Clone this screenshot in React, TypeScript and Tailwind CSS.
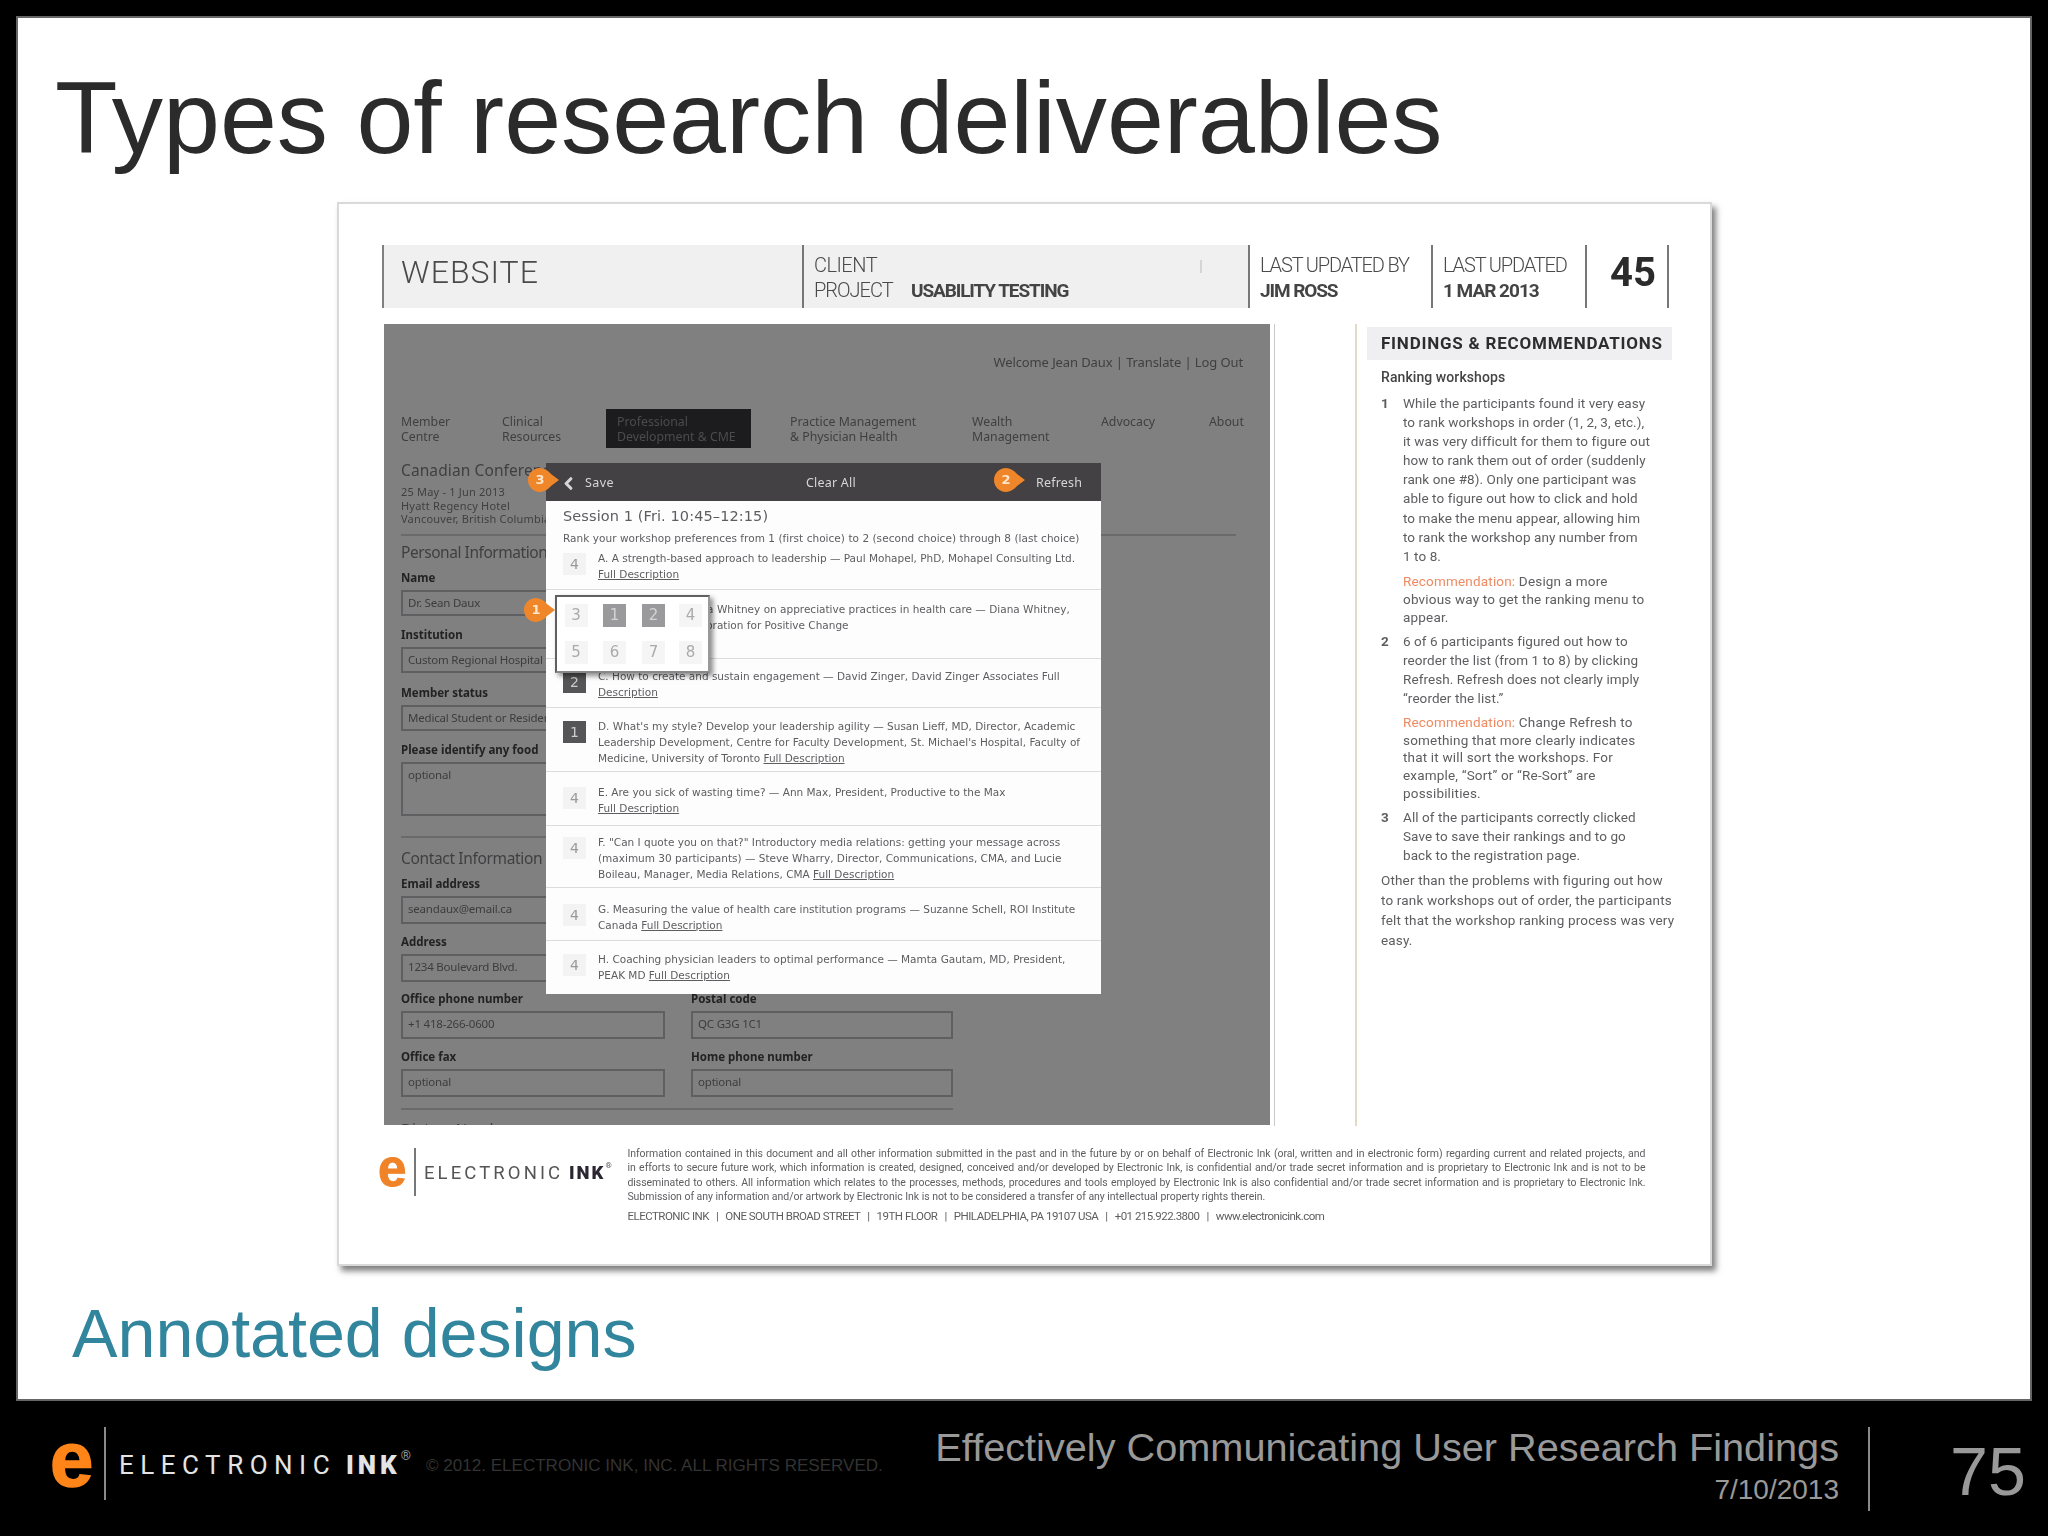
import React from "react";
import { ChevronLeft } from "lucide-react";

type LinesProps = { lines: string[]; className?: string };

const Lines = ({ lines, className }: LinesProps) => (
  <div className={className}>
    {lines.map((line) => (
      <div key={line} className="whitespace-nowrap">
        {line}
      </div>
    ))}
  </div>
);

const nav = [
  { lines: ["Member", "Centre"], className: "w-[101px]" },
  { lines: ["Clinical", "Resources"], className: "w-[104px]" },
  {
    lines: ["Professional", "Development & CME"],
    className: "w-[145px] bg-[#1c1b1d] pl-[11px] mr-[39px] text-[#4c4b4d]",
  },
  { lines: ["Practice Management", "& Physician Health"], className: "w-[182px]" },
  { lines: ["Wealth", "Management"], className: "w-[129px]" },
  { lines: ["Advocacy"], className: "w-[108px]" },
  { lines: ["About"], className: "w-[40px]" },
];

const sessions = [
  {
    rank: "4",
    lines: ["A. A strength-based approach to leadership — Paul Mohapel, PhD, Mohapel Consulting Ltd."],
    link: "Full Description",
    newLine: true,
    className: "h-[42px] pt-[3px]",
  },
  {
    rank: "",
    lines: [
      "B. Evening with Diana Whitney on appreciative practices in health care — Diana Whitney,",
      "PhD, President, Corporation for Positive Change",
    ],
    link: "",
    className: "h-[69px] pt-[11px] border-t",
  },
  {
    rank: "2",
    lines: ["C. How to create and sustain engagement — David Zinger, David Zinger Associates Full"],
    link: "Description",
    newLine: true,
    className: "h-[49px] pt-[9px] border-t",
  },
  {
    rank: "1",
    lines: [
      "D. What's my style? Develop your leadership agility — Susan Lieff, MD, Director, Academic",
      "Leadership Development, Centre for Faculty Development, St. Michael's Hospital, Faculty of",
      "Medicine, University of Toronto ",
    ],
    link: "Full Description",
    className: "h-[64px] pt-[10px] border-t",
  },
  {
    rank: "4",
    lines: ["E. Are you sick of wasting time? — Ann Max, President, Productive to the Max"],
    link: "Full Description",
    newLine: true,
    className: "h-[54px] pt-[12px] border-t",
  },
  {
    rank: "4",
    lines: [
      'F. "Can I quote you on that?" Introductory media relations: getting your message across',
      "(maximum 30 participants) — Steve Wharry, Director, Communications, CMA, and Lucie",
      "Boileau, Manager, Media Relations, CMA ",
    ],
    link: "Full Description",
    className: "h-[62px] pt-[8px] border-t",
  },
  {
    rank: "4",
    lines: [
      "G. Measuring the value of health care institution programs — Suzanne Schell, ROI Institute",
      "Canada ",
    ],
    link: "Full Description",
    className: "h-[53px] pt-[13px] border-t",
  },
  {
    rank: "4",
    lines: [
      "H. Coaching physician leaders to optimal performance — Mamta Gautam, MD, President,",
      "PEAK MD ",
    ],
    link: "Full Description",
    className: "h-[54px] pt-[10px] border-t",
  },
];

const legal = [
  "Information contained in this document and all other information submitted in the past and in the future by or on behalf of Electronic Ink (oral, written and in electronic form) regarding current and related projects, and",
  "in efforts to secure future work, which information is created, designed, conceived and/or developed by Electronic Ink, is confidential and/or trade secret information and is proprietary to Electronic Ink and is not to be",
  "disseminated to others. All information which relates to the processes, methods, procedures and tools employed by Electronic Ink is also confidential and/or trade secret information and is proprietary to Electronic Ink.",
];

const Field = ({ label, value, className }: { label: string; value: string; className?: string }) => (
  <div>
    <div className="h-4 text-[11.500px] leading-4 font-bold text-[#222] whitespace-nowrap">{label}</div>
    <div
      className={`mt-1 border-2 border-[#5f5e60] pl-[5px] text-[11.500px] leading-[22px] tracking-[-0.2px] text-[#3c3c3c] whitespace-nowrap ${
        className ?? "h-[28px] w-[264px]"
      }`}
    >
      {value}
    </div>
  </div>
);

const Marker = ({ n, className }: { n: string; className: string }) => (
  <div className={`absolute h-6 w-[31px] ${className}`}>
    <svg className="absolute inset-0" viewBox="0 0 31 24" fill="#f0862a">
      <path d="M12 0C5.400 0 0 5.400 0 12s5.400 12 12 12c4 0 8-2.500 11-6l8-6-8-6c-3-3.500-7-6-11-6z" />
    </svg>
    <span className="relative block w-6 text-center text-[13px] leading-6 font-bold text-[#ffe6cc]">{n}</span>
  </div>
);

const RankMenu = () => (
  <div className="absolute left-[9px] top-[132px] grid h-[78px] w-[155px] grid-cols-[38px_39px_39px_35px] grid-rows-2 items-center justify-items-center border-2 border-[#5f5f61] border-r-[#999] border-b-[#888] bg-white text-[15px] text-[#aaa] shadow-[3px_3px_5px_rgba(0,0,0,0.45)]">
    {["3", "1", "2", "4", "5", "6", "7", "8"].map((n) => (
      <span
        key={n}
        className={`h-[23px] w-[23px] text-center leading-[23px] ${
          n === "1" || n === "2" ? "bg-[#9a999b] text-[#d4d4d4]" : "bg-[#f5f5f5]"
        }`}
      >
        {n}
      </span>
    ))}
  </div>
);

const SessionDialog = () => (
  <div className="absolute left-[162px] top-[139px] h-[531px] w-[555px] bg-[#fefdfe] font-['DejaVu_Sans',sans-serif] text-[#5d5c5f]">
    <div className="flex h-[38px] items-center bg-[#434143] pt-[2px] text-[12.500px] text-[#d6d6d6] font-['Noto_Sans',sans-serif]">
      <ChevronLeft className="ml-[13px] h-[19px] w-[19px]" strokeWidth={4} />
      <span className="ml-[7px] w-[221px] tracking-[0.4px]">Save</span>
      <span className="w-[230px] tracking-[0.2px]">Clear All</span>
      <span className="tracking-[0.2px]">Refresh</span>
    </div>
    <h3 className="mt-[6px] pl-[17px] text-[14.500px] leading-[18px] tracking-[0.1px]">Session 1 (Fri. 10:45–12:15)</h3>
    <p className="mt-[5px] mb-px h-4 pl-[17px] text-[10.500px] leading-4 tracking-[0.04px] whitespace-nowrap">
      Rank your workshop preferences from 1 (first choice) to 2 (second choice) through 8 (last choice)
    </p>
    {sessions.map((s) => (
      <div key={s.lines[0]} className={`flex gap-[12px] border-[#dcdbdd] pl-[17px] ${s.className}`}>
        <span
          className={`mt-[3px] h-[22px] w-[23px] shrink-0 text-center text-[14px] leading-[22px] ${
            s.rank === "4" ? "bg-[#f3f3f3] text-[#999]" : s.rank ? "bg-[#555456] text-[#ccc]" : ""
          }`}
        >
          {s.rank}
        </span>
        <div className="text-[10.500px] leading-4 whitespace-nowrap">
          {s.lines.map((line, i) => (
            <div key={line}>
              {line}
              {!s.newLine && i === s.lines.length - 1 && <span className="underline">{s.link}</span>}
            </div>
          ))}
          {s.newLine && <div className="underline">{s.link}</div>}
        </div>
      </div>
    ))}
    <RankMenu />
    <Marker n="3" className="left-[-18px] top-[5px]" />
    <Marker n="2" className="left-[448px] top-[5px]" />
    <Marker n="1" className="left-[-22px] top-[135px]" />
  </div>
);

const Wireframe = () => (
  <div className="relative h-[801px] w-[886px] bg-[#808080] font-['Noto_Sans',sans-serif] text-[#3f3f41]">
    <div className="h-full overflow-hidden pl-[17px]">
      <div className="pt-[29px] pr-[27px] text-right text-[13px] leading-[18px] tracking-[-0.1px]">
        Welcome Jean Daux | Translate | Log Out
      </div>
      <div className="mt-[38px] flex h-[39px] text-[12.300px] leading-[14.500px]">
        {nav.map((item) => (
          <Lines key={item.lines[0]} lines={item.lines} className={`pt-[6px] ${item.className}`} />
        ))}
      </div>
      <h3 className="mt-3 text-[15.500px] leading-5 tracking-[0.1px]">Canadian Conference</h3>
      <Lines
        lines={["25 May - 1 Jun 2013", "Hyatt Regency Hotel", "Vancouver, British Columbia"]}
        className="mt-[5px] text-[11px] leading-[13.500px] tracking-[0.2px]"
      />
      <div className="mt-[8px] h-[2px] w-[835px] bg-[#6a696b]" />
      <h3 className="mt-[6px] text-[15.500px] leading-5 tracking-[-0.450px]">Personal Information</h3>
      <div className="mt-[8px] flex flex-col gap-[11.500px]">
        <Field label="Name" value="Dr. Sean Daux" className="h-[26px] w-[264px]" />
        <Field label="Institution" value="Custom Regional Hospital" className="h-[26px] w-[264px]" />
        <Field label="Member status" value="Medical Student or Resident" className="h-[26px] w-[264px]" />
        <Field label="Please identify any food" value="optional" className="h-[54px] w-[552px]" />
      </div>
      <div className="mt-[20px] h-[2px] w-[552px] bg-[#6a696b]" />
      <h3 className="mt-[10px] text-[15.500px] leading-5 tracking-[-0.350px]">Contact Information</h3>
      <div className="mt-[8px] grid grid-cols-[290px_262px]">
        <div className="flex flex-col gap-[9.500px]">
          <Field label="Email address" value="seandaux@email.ca" />
          <Field label="Address" value="1234 Boulevard Blvd." />
          <Field label="Office phone number" value="+1 418-266-0600" />
          <Field label="Office fax" value="optional" />
        </div>
        <div className="flex flex-col gap-[9.500px] pt-[115px]">
          <Field label="Postal code" value="QC G3G 1C1" className="h-[28px] w-[262px]" />
          <Field label="Home phone number" value="optional" className="h-[28px] w-[262px]" />
        </div>
      </div>
      <div className="mt-[11px] h-[2px] w-[552px] bg-[#6a696b]" />
      <h3 className="mt-[8px] text-[15px] leading-5">Dietary Needs</h3>
    </div>
    <SessionDialog />
  </div>
);

const Recommendation = ({ first, lines, className }: { first: string; lines: string[]; className: string }) => (
  <div className={`pl-[22px] tracking-[0.18px] whitespace-nowrap ${className}`}>
    <span className="text-[#ee8a62]">Recommendation:</span> {first}
    <Lines lines={lines} />
  </div>
);

const Finding = ({ n, lines }: { n: string; lines: string[] }) => (
  <div className="flex">
    <span className="w-[22px] font-bold">{n}</span>
    <Lines lines={lines} />
  </div>
);

const Findings = () => (
  <div className="ml-[80px] h-[802px] w-[320px] border-l-2 border-[#e2dac6] pt-[3px] pl-[10px] font-['Roboto',sans-serif] text-[#5e5d60]">
    <h2 className="h-[33px] w-[305px] bg-[#efeff1] pl-[14px] text-[17px] leading-[33px] font-bold tracking-[0.780px] text-[#2d2d2f] whitespace-nowrap">
      FINDINGS &amp; RECOMMENDATIONS
    </h2>
    <div className="flex flex-col gap-1.5 pl-[14px] pt-[8px] text-[13.500px] leading-[19.100px] tracking-[0.08px]">
      <div className="mb-0.5 text-[14px] leading-[18px] font-medium text-[#444]">Ranking workshops</div>
      <Finding
        n="1"
        lines={[
          "While the participants found it very easy",
          "to rank workshops in order (1, 2, 3, etc.),",
          "it was very difficult for them to figure out",
          "how to rank them out of order (suddenly",
          "rank one #8). Only one participant was",
          "able to figure out how to click and hold",
          "to make the menu appear, allowing him",
          "to rank the workshop any number from",
          "1 to 8.",
        ]}
      />
      <Recommendation
        first="Design a more"
        lines={["obvious way to get the ranking menu to", "appear."]}
        className="leading-[18px]"
      />
      <Finding
        n="2"
        lines={[
          "6 of 6 participants figured out how to",
          "reorder the list (from 1 to 8) by clicking",
          "Refresh. Refresh does not clearly imply",
          "“reorder the list.”",
        ]}
      />
      <Recommendation
        first="Change Refresh to"
        lines={[
          "something that more clearly indicates",
          "that it will sort the workshops. For",
          "example, “Sort” or “Re-Sort” are",
          "possibilities.",
        ]}
        className="leading-[17.600px]"
      />
      <Finding
        n="3"
        lines={[
          "All of the participants correctly clicked",
          "Save to save their rankings and to go",
          "back to the registration page.",
        ]}
      />
      <Lines
        className="leading-[19.800px] tracking-[0.16px]"
        lines={[
          "Other than the problems with figuring out how",
          "to rank workshops out of order, the participants",
          "felt that the workshop ranking process was very",
          "easy.",
        ]}
      />
    </div>
  </div>
);

const DocumentHeader = () => (
  <div className="flex h-[63px] pl-[43px] text-[20px] leading-[25px] font-light text-[#4a4a4a] whitespace-nowrap font-['Roboto',sans-serif]">
    <div className="w-[420px] border-l-2 border-[#808080] bg-[#f0f0f0] pt-[8px] pl-[17px] text-[32px] leading-[38px] tracking-[1px]">
      WEBSITE
    </div>
    <div className="flex w-[446px] border-l-2 border-[#777] bg-[#f0f0f0] pt-[8px] pl-[10px]">
      <div>
        <div className="tracking-[-0.5px]">CLIENT</div>
        <div>
          <span className="inline-block w-[97px] tracking-[-1px]">PROJECT</span>
          <span className="text-[19px] font-bold tracking-[-1.100px] text-[#444]">USABILITY TESTING</span>
        </div>
      </div>
      <div className="mt-[7px] ml-[132px] h-[13px] w-[2px] bg-[#d5d5d5]" />
    </div>
    <div className="w-[183px] border-l-2 border-[#777] pt-[8px] pl-[10px]">
      <div className="tracking-[-1.150px]">LAST UPDATED BY</div>
      <div className="text-[19px] font-bold tracking-[-1.100px] text-[#444]">JIM ROSS</div>
    </div>
    <div className="w-[154px] border-l-2 border-[#777] pt-[8px] pl-[10px]">
      <div className="tracking-[-1.150px]">LAST UPDATED</div>
      <div className="text-[19px] font-bold tracking-[-1px] text-[#444]">1 MAR 2013</div>
    </div>
    <div className="w-[84px] border-x-2 border-[#777] pt-[3px] pl-[23px] text-[40px] leading-[50px] font-bold text-[#2b2b2b]">
      45
    </div>
  </div>
);

const DocumentPage = () => (
  <div className="ml-[319px] h-[1064px] w-[1375px] border-2 border-[#d9d9d9] bg-white shadow-[4px_5px_6px_rgba(0,0,0,0.5)]">
    <div className="pt-[41px] blur-[0.500px]">
      <DocumentHeader />
      <div className="mt-4 flex pl-[45px]">
        <Wireframe />
        <div className="ml-[4px] w-px bg-[#c8c8c8]" />
        <Findings />
      </div>
      <div className="mt-[21px] flex pl-[39px] whitespace-nowrap">
        <div className="flex h-[50px] items-center">
          <span className="w-[36px] font-['Liberation_Sans',sans-serif] text-[51px] leading-[50px] font-bold text-[#f08328] [-webkit-text-stroke:1px_#f08328]">
            <span className="relative top-[-3px]">e</span>
          </span>
          <div className="h-[48px] w-[2px] bg-[#777]" />
          <div className="ml-[8px] flex pt-[3px] font-['Roboto',sans-serif] text-[18.500px] text-[#555]">
            <span className="w-[145px] tracking-[3.100px]">ELECTRONIC</span>
            <span className="font-black tracking-[2px] text-[#2a2733]">INK</span>
            <span className="w-[8px] text-[8px]">®</span>
          </div>
        </div>
        <div className="ml-[14px] font-['Roboto',sans-serif] text-[#5e5d60]">
          <div className="w-[1018px] text-[10.500px] leading-[14.300px] tracking-[-0.04px]">
            <Lines lines={legal} className="[text-align-last:justify]" />
            <div>
              Submission of any information and/or artwork by Electronic Ink is not to be considered a transfer of any
              intellectual property rights therein.
            </div>
          </div>
          <div className="mt-[3px] text-[11.500px] leading-[18px] tracking-[-0.510px] whitespace-pre">
            ELECTRONIC INK   |   ONE SOUTH BROAD STREET   |   19TH FLOOR   |   PHILADELPHIA, PA 19107 USA   |   +01
            215.922.3800   |   www.electronicink.com
          </div>
        </div>
      </div>
    </div>
  </div>
);

const SlideFooter = () => (
  <div className="flex h-[135px] pl-[49px] whitespace-nowrap">
    <div className="flex h-[124px] items-center">
      <span className="w-[55px] font-['Liberation_Sans',sans-serif] text-[78px] leading-[80px] font-bold text-[#ff8519] [-webkit-text-stroke:1.500px_#ff8519]">
        <span className="relative top-[-4px] left-[1px]">e</span>
      </span>
      <div className="h-[73px] w-[2px] bg-[#8a8a8a]" />
      <div className="ml-[13px] flex pt-[4px] font-['Roboto',sans-serif] text-[26px] text-[#e4e4e4]">
        <span className="w-[227px] tracking-[6.500px]">ELECTRONIC</span>
        <span className="font-black tracking-[4px]">INK</span>
        <span className="text-[13px] text-[#999]">®</span>
      </div>
      <span className="ml-[15px] w-[496px] pt-[6px] text-[17.060px] text-[#333]">
        © 2012. ELECTRONIC INK, INC. ALL RIGHTS RESERVED.
      </span>
    </div>
    <div className="flex-1 pt-[21px] text-right text-[#999]">
      <div className="text-[39.700px] leading-[50px]">Effectively Communicating User Research Findings</div>
      <div className="text-[28px] leading-[36px]">7/10/2013</div>
    </div>
    <div className="mt-[26px] ml-[29px] h-[84px] w-[2px] bg-[#8a8a8a]" />
    <div className="w-[178px] pt-[30px] pr-[22px] text-right text-[68.270px] leading-[80px] text-[#999]">75</div>
  </div>
);

const App = () => {
  return (
    <div className="h-[1536px] w-[2048px] overflow-hidden bg-black pt-4 font-['Liberation_Sans',Arial,sans-serif]">
      <div className="ml-4 h-[1385px] w-[2016px] border-2 border-[#666] bg-white">
        <h1 className="h-[184px] pt-[40px] pl-[37px] text-[102.400px] leading-[120px] tracking-[-0.04px] text-[#2b2b2b] whitespace-nowrap">
          Types of research deliverables
        </h1>
        <DocumentPage />
        <h2 className="mt-[27px] pl-[54px] text-[68.270px] leading-[80px] tracking-[-0.05px] text-[#31859c]">
          Annotated designs
        </h2>
      </div>
      <SlideFooter />
    </div>
  );
};

export default App;
